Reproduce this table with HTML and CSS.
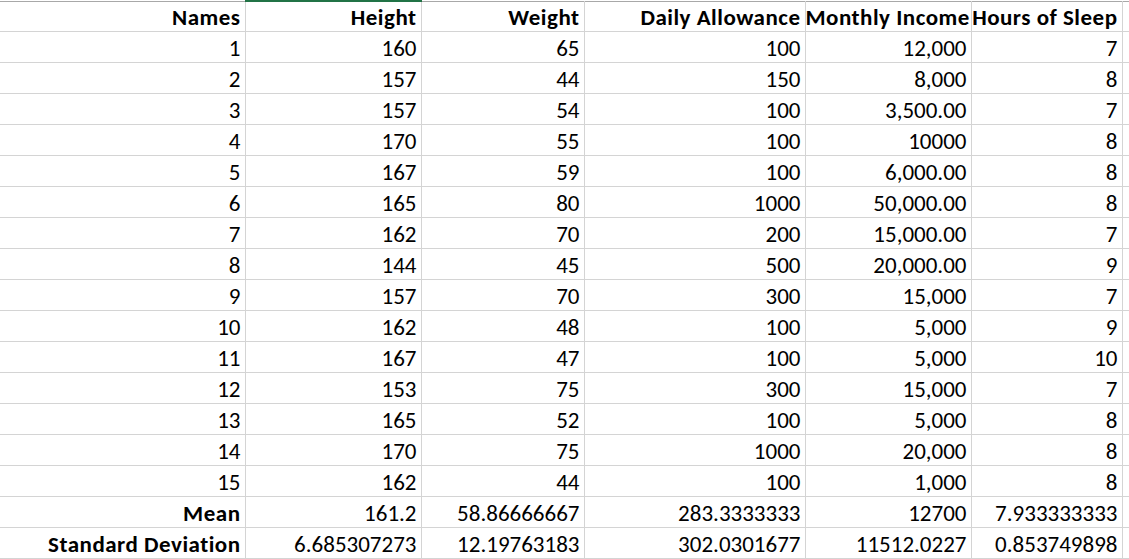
FILE: index.html
```html
<!DOCTYPE html>
<html>
<head>
<meta charset="utf-8">
<link rel="stylesheet" href="styles.css">
</head>
<body>
<table class="sheet">
  <colgroup>
    <col class="c1"><col class="c2"><col class="c3"><col class="c4"><col class="c5"><col class="c6"><col class="c7">
  </colgroup>
  <thead>
    <tr class="head">
      <th>Names</th><th class="sel">Height</th><th>Weight</th><th>Daily Allowance</th><th>Monthly Income</th><th>Hours of Sleep</th><th></th>
    </tr>
  </thead>
  <tbody>
    <tr><td>1</td><td>160</td><td>65</td><td>100</td><td>12,000</td><td>7</td><td></td></tr>
    <tr><td>2</td><td>157</td><td>44</td><td>150</td><td>8,000</td><td>8</td><td></td></tr>
    <tr><td>3</td><td>157</td><td>54</td><td>100</td><td>3,500.00</td><td>7</td><td></td></tr>
    <tr><td>4</td><td>170</td><td>55</td><td>100</td><td>10000</td><td>8</td><td></td></tr>
    <tr><td>5</td><td>167</td><td>59</td><td>100</td><td>6,000.00</td><td>8</td><td></td></tr>
    <tr><td>6</td><td>165</td><td>80</td><td>1000</td><td>50,000.00</td><td>8</td><td></td></tr>
    <tr><td>7</td><td>162</td><td>70</td><td>200</td><td>15,000.00</td><td>7</td><td></td></tr>
    <tr><td>8</td><td>144</td><td>45</td><td>500</td><td>20,000.00</td><td>9</td><td></td></tr>
    <tr><td>9</td><td>157</td><td>70</td><td>300</td><td>15,000</td><td>7</td><td></td></tr>
    <tr><td>10</td><td>162</td><td>48</td><td>100</td><td>5,000</td><td>9</td><td></td></tr>
    <tr><td>11</td><td>167</td><td>47</td><td>100</td><td>5,000</td><td>10</td><td></td></tr>
    <tr><td>12</td><td>153</td><td>75</td><td>300</td><td>15,000</td><td>7</td><td></td></tr>
    <tr><td>13</td><td>165</td><td>52</td><td>100</td><td>5,000</td><td>8</td><td></td></tr>
    <tr><td>14</td><td>170</td><td>75</td><td>1000</td><td>20,000</td><td>8</td><td></td></tr>
    <tr><td>15</td><td>162</td><td>44</td><td>100</td><td>1,000</td><td>8</td><td></td></tr>
    <tr><th>Mean</th><td>161.2</td><td>58.86666667</td><td>283.3333333</td><td>12700</td><td>7.933333333</td><td></td></tr>
    <tr><th>Standard Deviation</th><td>6.685307273</td><td>12.19763183</td><td>302.0301677</td><td>11512.0227</td><td>0.853749898</td><td></td></tr>
  </tbody>
</table>
</body>
</html>
```
FILE: styles.css
```css
html, body {
  margin: 0;
  padding: 0;
  background: #ffffff;
}
body {
  width: 1129px;
  height: 559px;
  overflow: hidden;
}
.sheet {
  border-collapse: collapse;
  table-layout: fixed;
  width: 1136px;
  font-family: Calibri, Carlito, "Open Sans", sans-serif;
  font-size: 23px;
  color: #000;
}
.c1 { width: 245px; }
.c2 { width: 176px; }
.c3 { width: 163px; }
.c4 { width: 221px; }
.c5 { width: 166px; }
.c6 { width: 151px; }
.c7 { width: 14px; }
.sheet th,
.sheet td {
  border: 1px solid #d4d4d4;
  padding: 0 4px 2px 0;
  height: 31px;
  box-sizing: border-box;
  text-align: right;
  vertical-align: bottom;
  line-height: 24px;
  white-space: nowrap;
  overflow: visible;
}
.sheet th { font-weight: bold; letter-spacing: 0.5px; }
.sheet tr td:first-child,
.sheet tr th:first-child { border-left: none; }
.head th {
  border-top: 1px solid #a8a8a8;
  height: 30px;
}
.head th.sel {
  border-top: 2px solid #217346;
}
```
